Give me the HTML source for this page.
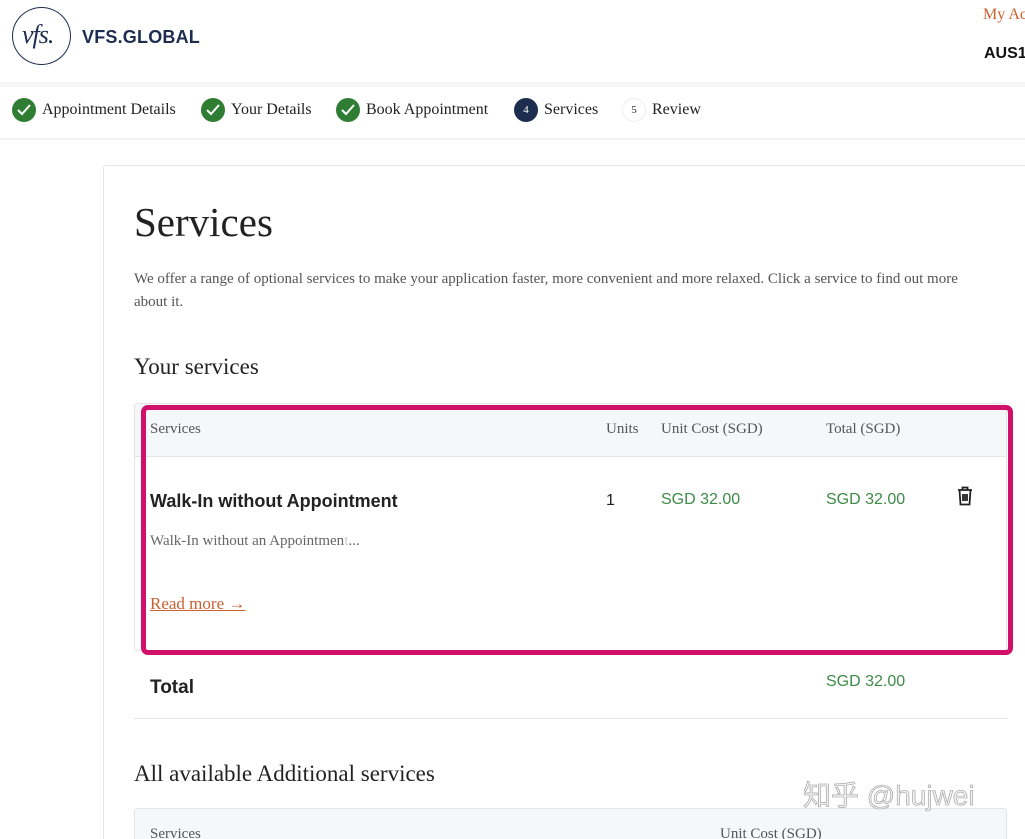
<!DOCTYPE html>
<html><head><meta charset="utf-8"><style>
*{margin:0;padding:0;box-sizing:border-box}
html,body{width:1025px;height:839px;overflow:hidden}
body{background:#fff;position:relative;font-family:"Liberation Serif",serif;color:#222}
.a{position:absolute;white-space:nowrap}
.s{font-family:"Liberation Sans",sans-serif}
.chk{position:absolute;width:24px;height:24px;border-radius:50%;background:#2e7d32;top:98px}
.chk svg{position:absolute;left:5px;top:6px}
.st{font-size:16px;top:101px;color:#222}
.g{color:#3d8b47;font-family:"Liberation Sans",sans-serif;font-size:16px}
</style></head><body>
<div class="a" style="left:12px;top:7px;width:59px;height:58px;border:1.5px solid #1c2d4f;border-radius:50%"></div>
<div class="a" style="left:22px;top:20px;font-size:26px;font-style:italic;color:#1c2d4f;letter-spacing:-1px">vfs.</div>
<div class="a s" style="left:82px;top:27px;font-size:18px;font-weight:bold;color:#1c2d4f;letter-spacing:0.2px">VFS.GLOBAL</div>
<div class="a" style="left:983px;top:6px;font-size:16px;color:#c9602f">My Ac</div>
<div class="a s" style="left:984px;top:45px;font-size:16px;font-weight:bold;color:#111">AUS1</div>
<div class="a" style="left:0;top:82px;width:1025px;height:5px;background:#f6f6f6"></div>
<div class="a" style="left:0;top:138px;width:1025px;height:2px;background:#f2f2f2"></div>
<div class="chk" style="left:12px"><svg width="14" height="12" viewBox="0 0 14 12"><path d="M1 6l4 4 8-9" stroke="#fff" stroke-width="2" fill="none"/></svg></div>
<div class="a st" style="left:42px">Appointment Details</div>
<div class="chk" style="left:201px"><svg width="14" height="12" viewBox="0 0 14 12"><path d="M1 6l4 4 8-9" stroke="#fff" stroke-width="2" fill="none"/></svg></div>
<div class="a st" style="left:231px">Your Details</div>
<div class="chk" style="left:336px"><svg width="14" height="12" viewBox="0 0 14 12"><path d="M1 6l4 4 8-9" stroke="#fff" stroke-width="2" fill="none"/></svg></div>
<div class="a st" style="left:366px">Book Appointment</div>
<div class="a" style="left:514px;top:98px;width:24px;height:24px;border-radius:50%;background:#1c2d4f;color:#fff;font-size:11px;text-align:center;line-height:24px">4</div>
<div class="a st" style="left:544px">Services</div>
<div class="a" style="left:622px;top:98px;width:24px;height:24px;border-radius:50%;border:1px solid #eee;color:#333;font-size:11px;text-align:center;line-height:22px">5</div>
<div class="a st" style="left:652px">Review</div>

<div class="a" style="left:103px;top:165px;width:940px;height:700px;border:1px solid #e6e6e6;border-radius:3px"></div>
<div class="a" style="left:134px;top:198px;font-size:41px;color:#222">Services</div>
<div class="a" style="left:134px;top:268px;font-size:15px;color:#555;line-height:23px;white-space:normal;width:850px">We offer a range of optional services to make your application faster, more convenient and more relaxed. Click a service to find out more about it.</div>
<div class="a" style="left:134px;top:354px;font-size:23px;color:#222">Your services</div>

<div class="a" style="left:134px;top:403px;width:873px;height:248px;border:1px solid #e4e4e4;border-radius:3px"></div>
<div class="a" style="left:135px;top:404px;width:871px;height:53px;background:#f6f7f9;border-bottom:1px solid #e6e6e6"></div>
<div class="a" style="left:150px;top:421px;font-size:15px;color:#555">Services</div>
<div class="a" style="left:606px;top:421px;font-size:15px;color:#555">Units</div>
<div class="a" style="left:661px;top:421px;font-size:15px;color:#555">Unit Cost (SGD)</div>
<div class="a" style="left:826px;top:421px;font-size:15px;color:#555">Total (SGD)</div>
<div class="a s" style="left:150px;top:491px;font-size:18px;font-weight:bold;color:#222">Walk-In without Appointment</div>
<div class="a s" style="left:606px;top:492px;font-size:16px;color:#222">1</div>
<div class="a g" style="left:661px;top:491px">SGD 32.00</div>
<div class="a g" style="left:826px;top:491px">SGD 32.00</div>
<svg class="a" style="left:955px;top:485px" width="20" height="22" viewBox="0 0 20 22"><path d="M3 5h14M7.5 5V2.5h5V5M4.5 5l1 14.5h9l1-14.5M8 9v7M10 9v7M12 9v7" stroke="#222" stroke-width="1.8" fill="none"/></svg>
<div class="a" style="left:150px;top:533px;font-size:15px;color:#666">Walk-In without an Appointmen<span style="color:#ccc">t</span>...</div>
<div class="a" style="left:150px;top:594px;font-size:17px;color:#c9602f;text-decoration:underline">Read more →</div>
<div class="a" style="left:141px;top:405px;width:872px;height:250px;border:5px solid #d0106a;border-radius:7px"></div>

<div class="a s" style="left:150px;top:677px;font-size:19px;font-weight:bold;color:#222">Total</div>
<div class="a g" style="left:826px;top:673px">SGD 32.00</div>
<div class="a" style="left:134px;top:718px;width:873px;height:1px;background:#e4e4e4"></div>
<div class="a" style="left:134px;top:761px;font-size:23px;color:#222">All available Additional services</div>
<div class="a" style="left:134px;top:808px;width:873px;height:40px;background:#f6f7f9;border:1px solid #e4e4e4;border-radius:3px"></div>
<div class="a" style="left:150px;top:826px;font-size:15px;color:#555">Services</div>
<div class="a" style="left:720px;top:826px;font-size:15px;color:#555">Unit Cost (SGD)</div>
<div class="a" style="left:803px;top:774px;font-size:28px;color:#f2f2f2;font-family:'Liberation Sans','Noto Sans CJK SC',sans-serif;-webkit-text-stroke:0.6px #999">知乎 @hujwei</div>
</body></html>
